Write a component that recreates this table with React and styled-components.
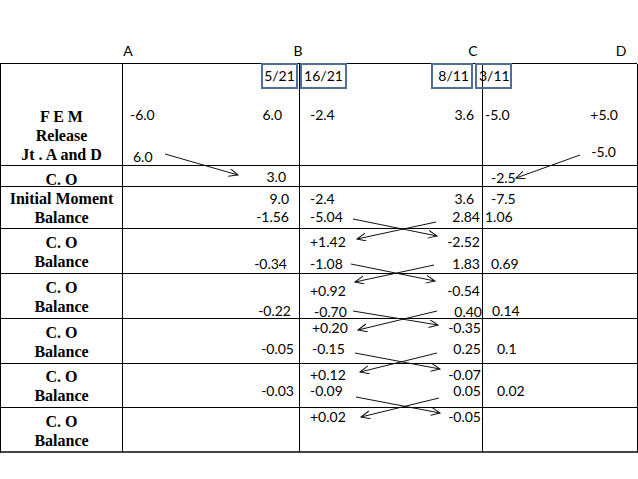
import styled, { createGlobalStyle } from "styled-components";

const GlobalStyle = createGlobalStyle`
  html, body {
    margin: 0;
    padding: 0;
    background: #fff;
  }
`

const Page = styled.div`
  position: relative;
  width: 638px;
  height: 479px;
  background: #fff;
  color: #000;
  font-family: Lato, "Liberation Sans", sans-serif;
  font-size: 14px;
  overflow: hidden;
`
const Header = styled.div`
  display: grid;
  grid-template-columns: 118px 20px 150px 20px 155px 20px 128px 20px;
  height: 63px;
  align-items: end;
`
const Letter = styled.div`
  text-align: center;
  line-height: 16px;
  padding-bottom: 4px;
`
const Table = styled.div`
  display: grid;
  grid-template-columns: 122px 177px 183px 155px;
  width: 637px;
  box-sizing: border-box;
  border-top: 1px solid #000;
  border-left: 1px solid #000;
`
const Label = styled.div`
  box-sizing: border-box;
  height: ${p => p.$h}px;
  padding-top: ${p => p.$pt}px;
  border-right: 1px solid #000;
  border-bottom: ${p => p.$last ? 2 : 1}px solid ${p => p.$last ? "#444" : "#000"};
  font-family: "Liberation Serif", "Times New Roman", serif;
  font-weight: bold;
  font-size: 16px;
  line-height: 19px;
  text-align: center;
  white-space: nowrap;
`
const Cell = styled.div`
  box-sizing: border-box;
  height: ${p => p.$h}px;
  display: flex;
  flex-direction: column;
  border-right: 1px solid #000;
  border-bottom: ${p => p.$last ? 2 : 1}px solid ${p => p.$last ? "#444" : "#000"};
`
const Line = styled.div`
  display: flex;
  justify-content: space-between;
  height: 14px;
  line-height: 14px;
  margin-top: ${p => p.$mt}px;
  padding: 0 ${p => p.$pr}px 0 ${p => p.$pl}px;
  white-space: nowrap;
`
const Fraction = styled.div`
  position: absolute;
  top: 63px;
  left: ${p => p.$x}px;
  width: ${p => p.$w}px;
  height: 26px;
  box-sizing: border-box;
  border: 2px solid #4d6f98;
  display: flex;
  align-items: center;
  justify-content: ${p => p.$align};
  padding: 0 2px;
  line-height: 16px;
`
const Arrows = styled.svg`
  position: absolute;
  left: 0;
  top: 0;
  pointer-events: none;
`

const rows = [
  {
    h: 102, pt: 43, label: ["F E M", "Release", "Jt . A and D"],
    a: [{ y: 51, l: "-6.0", r: "6.0", pl: 7, pr: 17 }, { y: 93, l: "6.0", pl: 10 }],
    b: [{ y: 51, l: "-2.4", r: "3.6", pl: 10, pr: 8 }],
    c: [{ y: 51, l: "-5.0", r: "+5.0", pl: 2, pr: 19 }, { y: 88, r: "-5.0", pr: 21 }],
  },
  {
    h: 21, pt: 4, label: ["C. O"],
    a: [{ y: 11, r: "3.0", pr: 13 }],
    b: [],
    c: [{ y: 12, l: "-2.5", pl: 8 }],
  },
  {
    h: 42, pt: 2, label: ["Initial Moment", "Balance"],
    a: [{ y: 12, r: "9.0", pr: 10 }, { y: 30, r: "-1.56", pr: 10 }],
    b: [{ y: 12, l: "-2.4", r: "3.6", pr: 8 }, { y: 30, l: "-5.04", r: "2.84", pr: 2 }],
    c: [{ y: 12, l: "-7.5", pl: 8 }, { y: 30, l: "1.06", pl: 2 }],
  },
  {
    h: 45, pt: 4, label: ["C. O", "Balance"],
    a: [{ y: 35, r: "-0.34", pr: 12 }],
    b: [{ y: 13, l: "+1.42", r: "-2.52", pr: 2 }, { y: 35, l: "-1.08", r: "1.83", pr: 2 }],
    c: [{ y: 35, l: "0.69", pl: 8 }],
  },
  {
    h: 45, pt: 4, label: ["C. O", "Balance"],
    a: [{ y: 37, r: "-0.22", pr: 8 }],
    b: [{ y: 17, l: "+0.92", r: "-0.54", pr: 2 }, { y: 38, l: "-0.70", r: "0.40", pl: 14, pr: 0 }],
    c: [{ y: 37, l: "0.14", pl: 9 }],
  },
  {
    h: 45, pt: 4, label: ["C. O", "Balance"],
    a: [{ y: 30, r: "-0.05", pr: 5 }],
    b: [{ y: 9, l: "+0.20", r: "-0.35", pl: 12, pr: 1 }, { y: 30, l: "-0.15", r: "0.25", pl: 12, pr: 1 }],
    c: [{ y: 30, l: "0.1", pl: 14 }],
  },
  {
    h: 44, pt: 3, label: ["C. O", "Balance"],
    a: [{ y: 27, r: "-0.03", pr: 5 }],
    b: [{ y: 11, l: "+0.12", r: "-0.07", pr: 1 }, { y: 27, l: "-0.09", r: "0.05", pr: 1 }],
    c: [{ y: 27, l: "0.02", pl: 14 }],
  },
  {
    h: 45, pt: 4, label: ["C. O", "Balance"],
    a: [],
    b: [{ y: 9, l: "+0.02", r: "-0.05", pr: 1 }],
    c: [],
  },
]

const fractions = [
  { x: 261, w: 37, t: "5/21", align: "center" },
  { x: 300, w: 47, t: "16/21", align: "center" },
  { x: 431, w: 42, t: "8/11", align: "flex-end" },
  { x: 475, w: 37, t: "3/11", align: "flex-start" },
]

const arrows = [
  [165, 154, 238, 175],
  [580, 155, 516, 178],
  [353, 219, 437, 236], [436, 222, 357, 239],
  [351, 264, 435, 281], [434, 265, 355, 282],
  [353, 311, 438, 325], [437, 311, 358, 330],
  [355, 353, 440, 369], [437, 353, 360, 372],
  [356, 397, 440, 413], [439, 398, 361, 417],
]

const DataCell = ({ lines, h, last }) => {
  let bottom = 0
  return (
    <Cell $h={h} $last={last}>
      {lines.map((ln, i) => {
        const mt = ln.y - 7 - bottom
        bottom = ln.y + 7
        return (
          <Line key={i} $mt={mt} $pl={ln.pl ?? 10} $pr={ln.pr ?? 2}>
            <span>{ln.l || ""}</span>
            <span>{ln.r || ""}</span>
          </Line>
        )
      })}
    </Cell>
  )
}

const App = () => {
  return (
    <Page>
      <GlobalStyle />
      <Header>
        <span />
        <Letter>A</Letter>
        <span />
        <Letter>B</Letter>
        <span />
        <Letter>C</Letter>
        <span />
        <Letter>D</Letter>
      </Header>
      <Table>
        {rows.map((row, i) => {
          const last = i === rows.length - 1
          return [
            <Label key={`l${i}`} $h={row.h} $pt={row.pt} $last={last}>
              {row.label.map(t => <div key={t}>{t}</div>)}
            </Label>,
            <DataCell key={`a${i}`} lines={row.a} h={row.h} last={last} />,
            <DataCell key={`b${i}`} lines={row.b} h={row.h} last={last} />,
            <DataCell key={`c${i}`} lines={row.c} h={row.h} last={last} />,
          ]
        })}
      </Table>
      {fractions.map(f => (
        <Fraction key={f.t} $x={f.x} $w={f.w} $align={f.align}>{f.t}</Fraction>
      ))}
      <Arrows width="638" height="479" viewBox="0 0 638 479">
        <defs>
          <marker id="head" markerUnits="userSpaceOnUse" markerWidth="12" markerHeight="10"
            refX="9" refY="4" orient="auto">
            <path d="M0,0 L9,4 L0,8" fill="none" stroke="#111" strokeWidth="1" />
          </marker>
        </defs>
        {arrows.map(([x1, y1, x2, y2], i) => (
          <line key={i} x1={x1} y1={y1} x2={x2} y2={y2} stroke="#111" strokeWidth="1" markerEnd="url(#head)" />
        ))}
      </Arrows>
    </Page>
  )
}

export default App
